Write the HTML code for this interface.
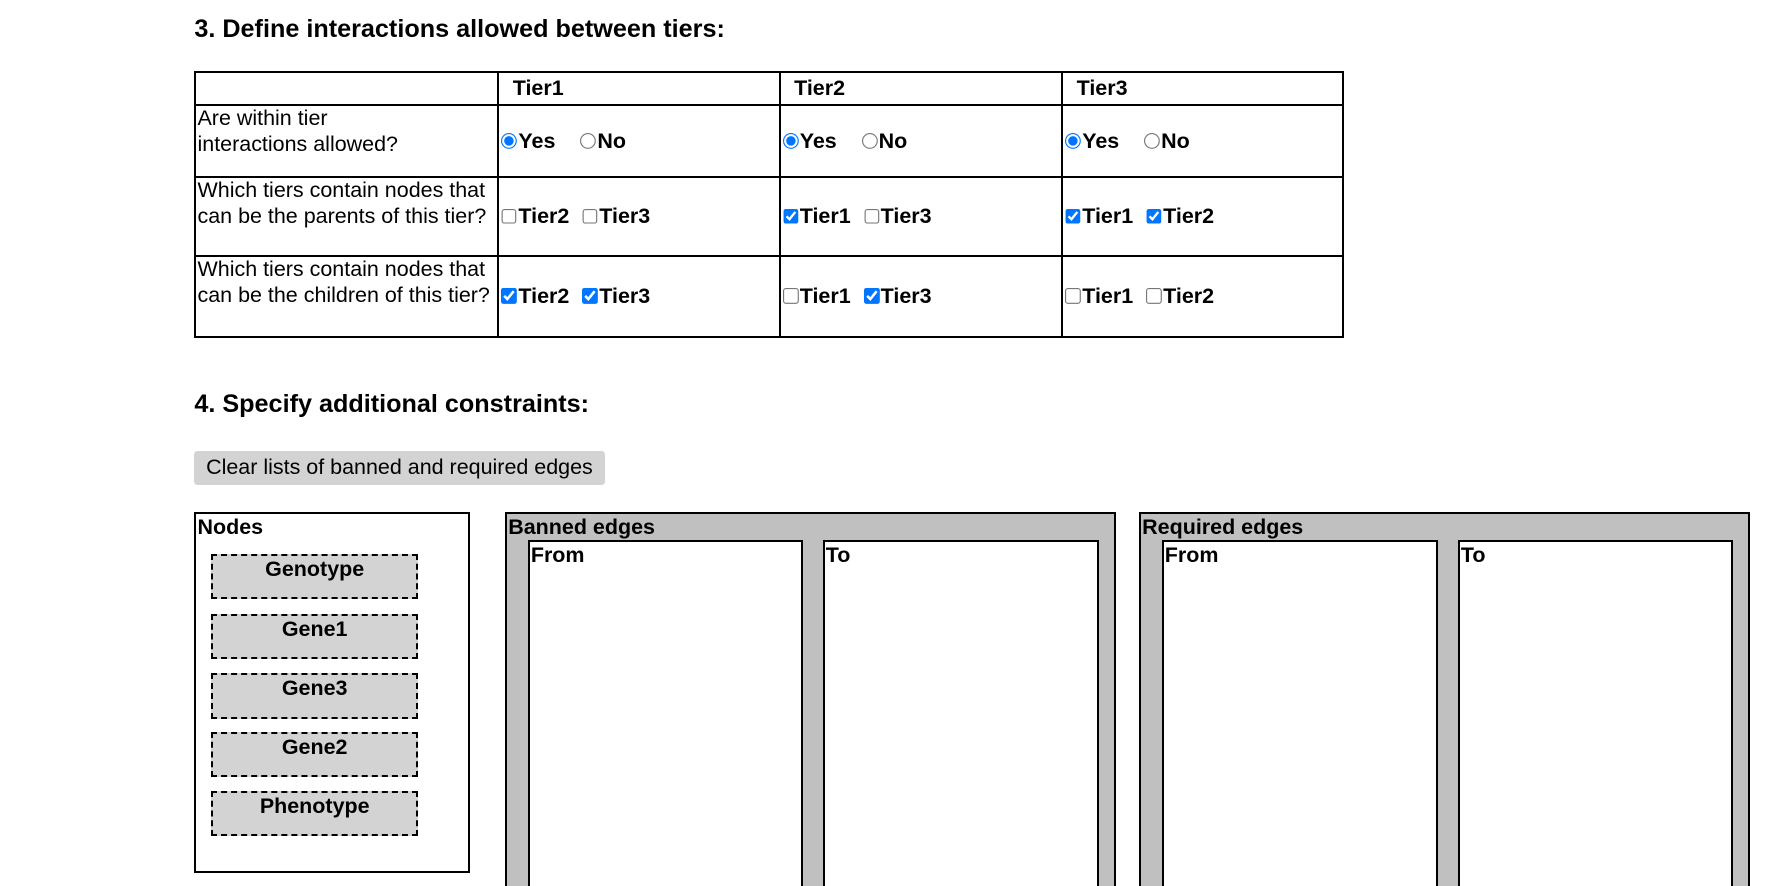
<!DOCTYPE html>
<html><head><meta charset="utf-8"><style>
html,body{margin:0;padding:0;background:#fff;overflow:hidden}
body{width:1772px;height:886px}
#w{zoom:1.13;position:relative;width:1568px;height:784px;font-family:"Liberation Sans",Arial,sans-serif;font-size:19px;color:#000;overflow:hidden}
.a{position:absolute}
h3{position:absolute;margin:0;font-size:22.3px;font-weight:bold;left:172px;white-space:nowrap}
table{position:absolute;left:172px;top:63px;border-collapse:collapse;width:1016px;table-layout:fixed}
td{border:2px solid #000;padding:0 1px;vertical-align:middle;line-height:24px;white-space:nowrap;overflow:hidden}
td.l{vertical-align:top;line-height:23px}
th{border:2px solid #000;text-align:left;padding:0 0 0 12px;height:25px;font-weight:bold;line-height:24px}
.o{font-weight:bold}
input{margin:0 1px 0 1px;vertical-align:-1px;width:14px;height:14px}
.btn{left:172px;top:399px;width:363px;height:30px;background:#d3d3d3;border-radius:3px;line-height:30px;text-align:center;white-space:nowrap}
.box{border:2px solid #000;box-sizing:border-box}
.node{position:absolute;left:187px;width:183px;height:40px;box-sizing:border-box;border:2px dashed #000;background:#d3d3d3;text-align:center;font-weight:bold;padding-top:0px;line-height:24px}
.lab{font-weight:bold;padding-left:1px;line-height:24px}
</style></head><body><div id="w">
<h3 style="top:13px">3. Define interactions allowed between tiers:</h3>
<table>
<colgroup><col style="width:268px"><col style="width:249px"><col style="width:250px"><col style="width:249px"></colgroup>
<tr style="height:29px"><td></td><th>Tier1</th><th>Tier2</th><th>Tier3</th></tr>
<tr style="height:64px"><td class="l">Are within tier<br>interactions allowed?</td>
<td class="o"><input type="radio" checked>Yes &nbsp;&nbsp;&nbsp;<input type="radio">No</td>
<td class="o"><input type="radio" checked>Yes &nbsp;&nbsp;&nbsp;<input type="radio">No</td>
<td class="o"><input type="radio" checked>Yes &nbsp;&nbsp;&nbsp;<input type="radio">No</td></tr>
<tr style="height:70px"><td class="l">Which tiers contain nodes that<br>can be the parents of this tier?</td>
<td class="o"><input type="checkbox">Tier2 &nbsp;<input type="checkbox">Tier3</td>
<td class="o"><input type="checkbox" checked>Tier1 &nbsp;<input type="checkbox">Tier3</td>
<td class="o"><input type="checkbox" checked>Tier1 &nbsp;<input type="checkbox" checked>Tier2</td></tr>
<tr style="height:71px"><td class="l">Which tiers contain nodes that<br>can be the children of this tier?</td>
<td class="o"><input type="checkbox" checked>Tier2 &nbsp;<input type="checkbox" checked>Tier3</td>
<td class="o"><input type="checkbox">Tier1 &nbsp;<input type="checkbox" checked>Tier3</td>
<td class="o"><input type="checkbox">Tier1 &nbsp;<input type="checkbox">Tier2</td></tr>
</table>
<h3 style="top:345px">4. Specify additional constraints:</h3>
<div class="a btn">Clear lists of banned and required edges</div>
<div class="a box" style="left:172px;top:453px;width:244px;height:320px"><div class="lab">Nodes</div></div>
<div class="node" style="top:490px">Genotype</div>
<div class="node" style="top:543px">Gene1</div>
<div class="node" style="top:596px">Gene3</div>
<div class="node" style="top:648px">Gene2</div>
<div class="node" style="top:700px">Phenotype</div>
<div class="a box" style="left:447px;top:453px;width:541px;height:400px;background:#c0c0c0"><div class="lab">Banned edges</div></div>
<div class="a box" style="left:467px;top:478px;width:244px;height:380px;background:#fff"><div class="lab">From</div></div>
<div class="a box" style="left:728px;top:478px;width:245px;height:380px;background:#fff"><div class="lab">To</div></div>
<div class="a box" style="left:1008px;top:453px;width:541px;height:400px;background:#c0c0c0"><div class="lab">Required edges</div></div>
<div class="a box" style="left:1028px;top:478px;width:245px;height:380px;background:#fff"><div class="lab">From</div></div>
<div class="a box" style="left:1290px;top:478px;width:244px;height:380px;background:#fff"><div class="lab">To</div></div>
</div></body></html>
